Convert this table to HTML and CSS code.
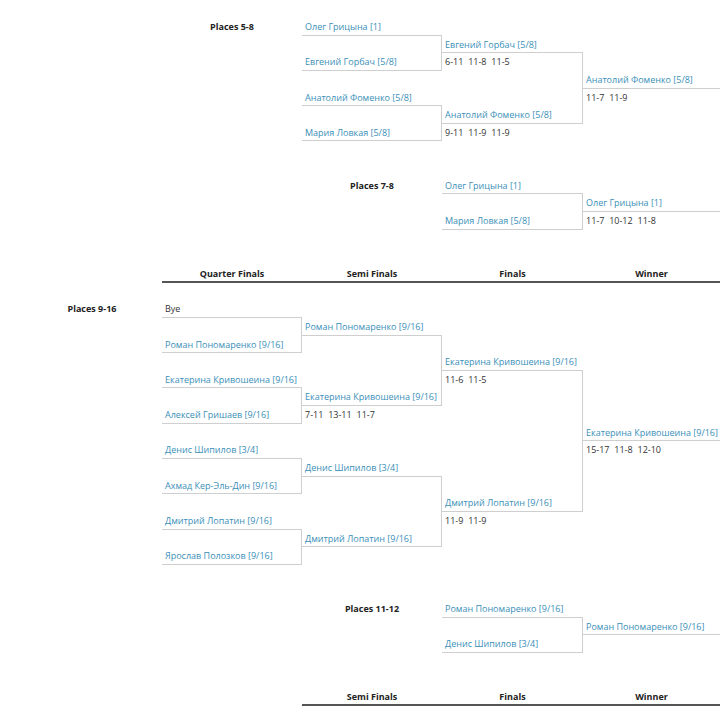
FILE: index.html
```html
<!DOCTYPE html>
<html lang="ru">
<head>
<meta charset="utf-8">
<title>Brackets</title>
<link rel="stylesheet" href="styles.css">
</head>
<body>
<div class="brackets">
  <!-- Places 5-8 -->
  <div class="row"><div class="k2 label">Places 5-8</div><div class="k3 b"><a href="#">Олег Грицына [1]</a></div></div>
  <div class="row"><div class="k3 r"></div><div class="k4 b"><a href="#">Евгений Горбач [5/8]</a></div></div>
  <div class="row"><div class="k3 b r"><a href="#">Евгений Горбач [5/8]</a></div><div class="k4 r score">6-11 11-8 11-5</div></div>
  <div class="row"><div class="k4 r"></div><div class="k5 b"><a href="#">Анатолий Фоменко [5/8]</a></div></div>
  <div class="row"><div class="k3 b"><a href="#">Анатолий Фоменко [5/8]</a></div><div class="k4 r"></div><div class="k5 score">11-7 11-9</div></div>
  <div class="row"><div class="k3 r"></div><div class="k4 b r"><a href="#">Анатолий Фоменко [5/8]</a></div></div>
  <div class="row"><div class="k3 b r"><a href="#">Мария Ловкая [5/8]</a></div><div class="k4 score">9-11 11-9 11-9</div></div>
  <div class="row"></div>
  <div class="row"></div>
  <!-- Places 7-8 -->
  <div class="row"><div class="k3 label">Places 7-8</div><div class="k4 b"><a href="#">Олег Грицына [1]</a></div></div>
  <div class="row"><div class="k4 r"></div><div class="k5 b"><a href="#">Олег Грицына [1]</a></div></div>
  <div class="row"><div class="k4 b r"><a href="#">Мария Ловкая [5/8]</a></div><div class="k5 score">11-7 10-12 11-8</div></div>
  <div class="row"></div>
  <div class="row"></div>
  <!-- header -->
  <div class="row head"><div class="k2">Quarter Finals</div><div class="k3">Semi Finals</div><div class="k4">Finals</div><div class="k5">Winner</div></div>
  <div class="row"></div>
  <!-- Places 9-16 -->
  <div class="row"><div class="k1 label">Places 9-16</div><div class="k2 b score">Bye</div></div>
  <div class="row"><div class="k2 r"></div><div class="k3 b"><a href="#">Роман Пономаренко [9/16]</a></div></div>
  <div class="row"><div class="k2 b r"><a href="#">Роман Пономаренко [9/16]</a></div><div class="k3 r"></div></div>
  <div class="row"><div class="k3 r"></div><div class="k4 b"><a href="#">Екатерина Кривошеина [9/16]</a></div></div>
  <div class="row"><div class="k2 b"><a href="#">Екатерина Кривошеина [9/16]</a></div><div class="k3 r"></div><div class="k4 r score">11-6 11-5</div></div>
  <div class="row"><div class="k2 r"></div><div class="k3 b r"><a href="#">Екатерина Кривошеина [9/16]</a></div><div class="k4 r"></div></div>
  <div class="row"><div class="k2 b r"><a href="#">Алексей Гришаев [9/16]</a></div><div class="k3 score">7-11 13-11 11-7</div><div class="k4 r"></div></div>
  <div class="row"><div class="k4 r"></div><div class="k5 b"><a href="#">Екатерина Кривошеина [9/16]</a></div></div>
  <div class="row"><div class="k2 b"><a href="#">Денис Шипилов [3/4]</a></div><div class="k4 r"></div><div class="k5 score">15-17 11-8 12-10</div></div>
  <div class="row"><div class="k2 r"></div><div class="k3 b"><a href="#">Денис Шипилов [3/4]</a></div><div class="k4 r"></div></div>
  <div class="row"><div class="k2 b r"><a href="#">Ахмад Кер-Эль-Дин [9/16]</a></div><div class="k3 r"></div><div class="k4 r"></div></div>
  <div class="row"><div class="k3 r"></div><div class="k4 b r"><a href="#">Дмитрий Лопатин [9/16]</a></div></div>
  <div class="row"><div class="k2 b"><a href="#">Дмитрий Лопатин [9/16]</a></div><div class="k3 r"></div><div class="k4 score">11-9 11-9</div></div>
  <div class="row"><div class="k2 r"></div><div class="k3 b r"><a href="#">Дмитрий Лопатин [9/16]</a></div></div>
  <div class="row"><div class="k2 b r"><a href="#">Ярослав Полозков [9/16]</a></div></div>
  <div class="row"></div>
  <div class="row"></div>
  <!-- Places 11-12 -->
  <div class="row"><div class="k3 label">Places 11-12</div><div class="k4 b"><a href="#">Роман Пономаренко [9/16]</a></div></div>
  <div class="row"><div class="k4 r"></div><div class="k5 b"><a href="#">Роман Пономаренко [9/16]</a></div></div>
  <div class="row"><div class="k4 b r"><a href="#">Денис Шипилов [3/4]</a></div></div>
  <div class="row"></div>
  <div class="row"></div>
  <!-- header -->
  <div class="row head"><div class="k3">Semi Finals</div><div class="k4">Finals</div><div class="k5">Winner</div></div>
</div>
</body>
</html>
```

FILE: styles.css
```css
html, body {
  margin: 0;
  padding: 0;
  background: #ffffff;
  overflow: hidden;
}

body {
  width: 720px;
  height: 720px;
  font-family: "Open Sans", "Noto Sans", sans-serif;
  font-size: 9px;
  color: #333333;
}

.brackets {
  padding-top: 18px;
}

.row {
  display: grid;
  grid-template-columns: 22px 140px 140px 140px 141px 137px;
  height: 17.65px;
}

.row > div {
  box-sizing: border-box;
  height: 17.65px;
  line-height: 17.65px;
  padding-left: 3px;
  white-space: nowrap;
  overflow: hidden;
}

.k1 { grid-column: 2; }
.k2 { grid-column: 3; }
.k3 { grid-column: 4; }
.k4 { grid-column: 5; }
.k5 { grid-column: 6; padding-left: 2px; }

.b { border-bottom: 1px solid #cfcfcf; }
.r { border-right: 1px solid #cfcfcf; }

a {
  color: #3a8fb8;
  text-decoration: none;
}

.score {
  color: #333333;
  word-spacing: 2.5px;
}

.row > .label {
  font-weight: 700;
  text-align: center;
  color: #222222;
  padding-left: 0;
}

.head > div {
  font-weight: 700;
  text-align: center;
  color: #222222;
  padding-left: 0;
  border-bottom: 2px solid #555555;
}
```
